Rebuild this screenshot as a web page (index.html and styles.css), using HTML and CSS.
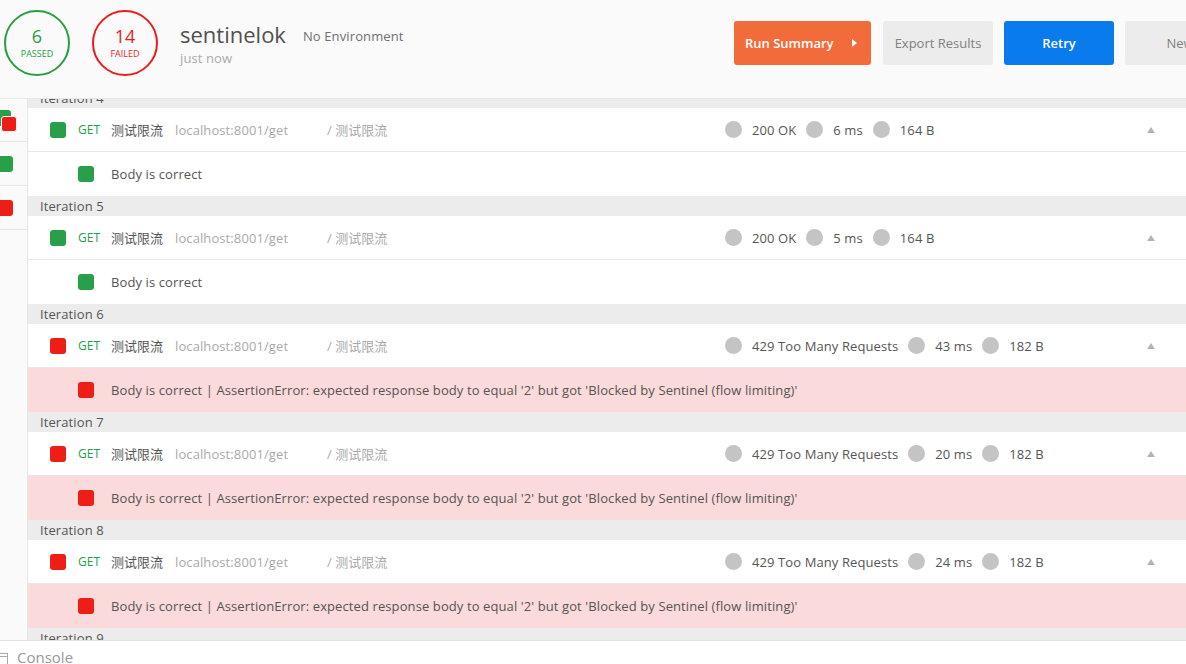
FILE: index.html
```html
<!DOCTYPE html>
<html>
<head>
<meta charset="utf-8">
<link rel="stylesheet" href="styles.css">
</head>
<body>
<div class="app">
  <header class="header">
    <div class="stat stat-pass">
      <div class="stat-num">6</div>
      <div class="stat-label">PASSED</div>
    </div>
    <div class="stat stat-fail">
      <div class="stat-num">14</div>
      <div class="stat-label">FAILED</div>
    </div>
    <div class="title-block">
      <div class="title-line"><span class="title">sentinelok</span><span class="env">No Environment</span></div>
      <div class="when">just now</div>
    </div>
    <div class="btn btn-orange">Run Summary<span class="btn-arrow"></span></div>
    <div class="btn btn-gray">Export Results</div>
    <div class="btn btn-blue">Retry</div>
    <div class="btn btn-gray btn-new">New</div>
  </header>

  <div class="main">
    <aside class="sidebar">
      <div class="side-row side-first">
        <span class="sq sq-green stack-back"></span>
        <span class="sq sq-red stack-front"></span>
      </div>
      <div class="side-row"><span class="sq sq-green side-sq"></span></div>
      <div class="side-row"><span class="sq sq-red side-sq"></span></div>
    </aside>

    <section class="content">
      <div class="list">
        <div class="iter">Iteration 4</div>
        <div class="req">
          <div class="req-main"><span class="sq sq-green"></span><span class="method">GET</span><span class="name">测试限流</span><span class="url">localhost:8001/get</span><span class="path">/ 测试限流</span></div>
          <div class="metrics"><span class="dot"></span><span class="mval">200 OK</span><span class="dot"></span><span class="mval">6 ms</span><span class="dot"></span><span class="mval">164 B</span></div>
          <div class="chev-wrap"><span class="chev"></span></div>
        </div>
        <div class="test"><span class="sq sq-green"></span><span class="test-text">Body is correct</span></div>

        <div class="iter">Iteration 5</div>
        <div class="req">
          <div class="req-main"><span class="sq sq-green"></span><span class="method">GET</span><span class="name">测试限流</span><span class="url">localhost:8001/get</span><span class="path">/ 测试限流</span></div>
          <div class="metrics"><span class="dot"></span><span class="mval">200 OK</span><span class="dot"></span><span class="mval">5 ms</span><span class="dot"></span><span class="mval">164 B</span></div>
          <div class="chev-wrap"><span class="chev"></span></div>
        </div>
        <div class="test"><span class="sq sq-green"></span><span class="test-text">Body is correct</span></div>

        <div class="iter">Iteration 6</div>
        <div class="req">
          <div class="req-main"><span class="sq sq-red"></span><span class="method">GET</span><span class="name">测试限流</span><span class="url">localhost:8001/get</span><span class="path">/ 测试限流</span></div>
          <div class="metrics"><span class="dot"></span><span class="mval">429 Too Many Requests</span><span class="dot"></span><span class="mval">43 ms</span><span class="dot"></span><span class="mval">182 B</span></div>
          <div class="chev-wrap"><span class="chev"></span></div>
        </div>
        <div class="test test-fail"><span class="sq sq-red"></span><span class="test-text">Body is correct | AssertionError: expected response body to equal '2' but got 'Blocked by Sentinel (flow limiting)'</span></div>

        <div class="iter">Iteration 7</div>
        <div class="req">
          <div class="req-main"><span class="sq sq-red"></span><span class="method">GET</span><span class="name">测试限流</span><span class="url">localhost:8001/get</span><span class="path">/ 测试限流</span></div>
          <div class="metrics"><span class="dot"></span><span class="mval">429 Too Many Requests</span><span class="dot"></span><span class="mval">20 ms</span><span class="dot"></span><span class="mval">182 B</span></div>
          <div class="chev-wrap"><span class="chev"></span></div>
        </div>
        <div class="test test-fail"><span class="sq sq-red"></span><span class="test-text">Body is correct | AssertionError: expected response body to equal '2' but got 'Blocked by Sentinel (flow limiting)'</span></div>

        <div class="iter">Iteration 8</div>
        <div class="req">
          <div class="req-main"><span class="sq sq-red"></span><span class="method">GET</span><span class="name">测试限流</span><span class="url">localhost:8001/get</span><span class="path">/ 测试限流</span></div>
          <div class="metrics"><span class="dot"></span><span class="mval">429 Too Many Requests</span><span class="dot"></span><span class="mval">24 ms</span><span class="dot"></span><span class="mval">182 B</span></div>
          <div class="chev-wrap"><span class="chev"></span></div>
        </div>
        <div class="test test-fail"><span class="sq sq-red"></span><span class="test-text">Body is correct | AssertionError: expected response body to equal '2' but got 'Blocked by Sentinel (flow limiting)'</span></div>

        <div class="iter">Iteration 9</div>
        <div class="req">
          <div class="req-main"><span class="sq sq-red"></span><span class="method">GET</span><span class="name">测试限流</span><span class="url">localhost:8001/get</span><span class="path">/ 测试限流</span></div>
        </div>
      </div>
    </section>
  </div>

  <footer class="console">
    <svg class="console-icon" width="12" height="14" viewBox="0 0 12 14"><rect x="0.5" y="0.5" width="11" height="13" fill="none" stroke="#a8a8a8" stroke-width="1"/><line x1="0.5" y1="3.5" x2="11.5" y2="3.5" stroke="#a8a8a8" stroke-width="1"/></svg>
    <span class="console-text">Console</span>
  </footer>
</div>
</body>
</html>
```
FILE: styles.css
```css
* { box-sizing: border-box; }
html, body { margin: 0; padding: 0; }
body {
  width: 1186px;
  height: 664px;
  overflow: hidden;
  font-family: "Open Sans", "Noto Sans CJK SC", sans-serif;
  color: #555;
  background: #fff;
}
.app { width: 1186px; height: 664px; overflow: hidden; }

/* header */
.header {
  height: 99px;
  background: #fafafa;
  border-bottom: 1px solid #e8e8e8;
  display: flex;
  align-items: center;
  padding: 0 0 12px 4px;
  white-space: nowrap;
}
.stat {
  flex: 0 0 66px;
  width: 66px;
  height: 66px;
  border-radius: 50%;
  border: 2px solid;
  display: flex;
  flex-direction: column;
  align-items: center;
  justify-content: center;
  padding-bottom: 2px;
}
.stat-pass { border-color: #2a9d43; color: #2a9d43; }
.stat-fail { border-color: #ed1c1c; color: #ed1c1c; margin-left: 22px; }
.stat-num { font-size: 18px; line-height: 20px; }
.stat-label { font-size: 9px; line-height: 11px; margin-top: 2px; }

.title-block {
  flex: 0 0 554px;
  margin-left: 22px;
  padding-top: 2px;
}
.title-line { display: flex; align-items: baseline; }
.title { font-size: 22px; line-height: 26px; color: #505050; }
.env { font-size: 13px; color: #707070; margin-left: 17px; position: relative; top: -2px; letter-spacing: 0.12px; }
.when { font-size: 13px; line-height: 18px; color: #aaa; margin-top: 2px; letter-spacing: 0.1px; }

.btn {
  flex: 0 0 110px;
  height: 44px;
  border-radius: 3px;
  font-size: 13px;
  display: flex;
  align-items: center;
  justify-content: center;
}
.btn-orange {
  flex-basis: 137px;
  background: #f26b3a;
  color: #fff;
  font-weight: 600;
  justify-content: flex-start;
  padding-left: 11px;
}
.btn-arrow {
  width: 0; height: 0;
  border-left: 5px solid #fff;
  border-top: 4px solid transparent;
  border-bottom: 4px solid transparent;
  margin-left: 18px;
}
.btn-gray { background: #ececec; color: #808080; margin-left: 12px; }
.btn-blue { background: #097bed; color: #fff; font-weight: 600; margin-left: 11px; }
.btn-new { margin-left: 11px; }

/* main */
.main { height: 541px; display: flex; overflow: hidden; }
.sidebar {
  flex: 0 0 28px;
  background: #fafafa;
  border-right: 1px solid #e6e6e6;
  overflow: hidden;
}
.side-row {
  height: 44px;
  border-bottom: 1px solid #e6e6e6;
  display: flex;
  align-items: center;
  position: relative;
}
.side-first { height: 43px; }
.side-sq { margin-left: -3px; }
.stack-back { position: absolute; left: -5px; top: 11px; }
.stack-front { position: absolute; left: 1px; top: 17px; width: 18px; height: 18px; border: 1px solid #f4f4f4; }

.sq { display: inline-block; width: 16px; height: 16px; border-radius: 3px; flex: 0 0 auto; }
.sq-green { background: #28a04a; }
.sq-red { background: #ee1d16; }

.content { flex: 1; overflow: hidden; background: #fff; letter-spacing: 0.1px; }
.list { margin-top: -11px; width: 1158px; }

.iter {
  height: 20px;
  line-height: 20px;
  background: #ececec;
  padding-left: 12px;
  font-size: 13px;
  color: #555;
}

.req {
  height: 44px;
  border-bottom: 1px solid #e8e8e8;
  display: flex;
  align-items: center;
  white-space: nowrap;
}
.req-main {
  flex: 0 0 697px;
  display: flex;
  align-items: center;
  padding-left: 22px;
  font-size: 13px;
}
.method { width: 33px; margin-left: 12px; font-size: 12px; color: #26a148; }
.name { width: 64px; color: #555; font-family: "Noto Sans CJK SC", sans-serif; letter-spacing: 0; }
.url { width: 152px; color: #aaa; }
.path { color: #aaa; font-family: "Open Sans", "Noto Sans CJK SC", sans-serif; letter-spacing: 0; }

.metrics { flex: 1; display: flex; align-items: center; font-size: 13px; color: #555; }
.dot { width: 17px; height: 17px; border-radius: 50%; background: #c4c4c4; margin-right: 10px; }
.mval { margin-right: 10px; }
.chev-wrap { flex: 0 0 39px; display: flex; align-items: center; }
.chev {
  width: 0; height: 0;
  border-bottom: 6px solid #b4b4b4;
  border-left: 4.5px solid transparent;
  border-right: 4.5px solid transparent;
}

.test {
  height: 44px;
  display: flex;
  align-items: center;
  padding-left: 50px;
  font-size: 13px;
  white-space: nowrap;
}
.test-fail { background: #fadada; }
.test-text { margin-left: 17px; color: #555; }

/* console */
.console {
  height: 30px;
  border-top: 1px solid #e2e2e2;
  background: #fff;
  display: flex;
  align-items: flex-start;
  padding-top: 11px;
}
.console-icon { margin-left: -4px; margin-top: 1px; }
.console-text { font-size: 15px; line-height: 20px; color: #999; margin-left: 9px; margin-top: -5px; }
```
